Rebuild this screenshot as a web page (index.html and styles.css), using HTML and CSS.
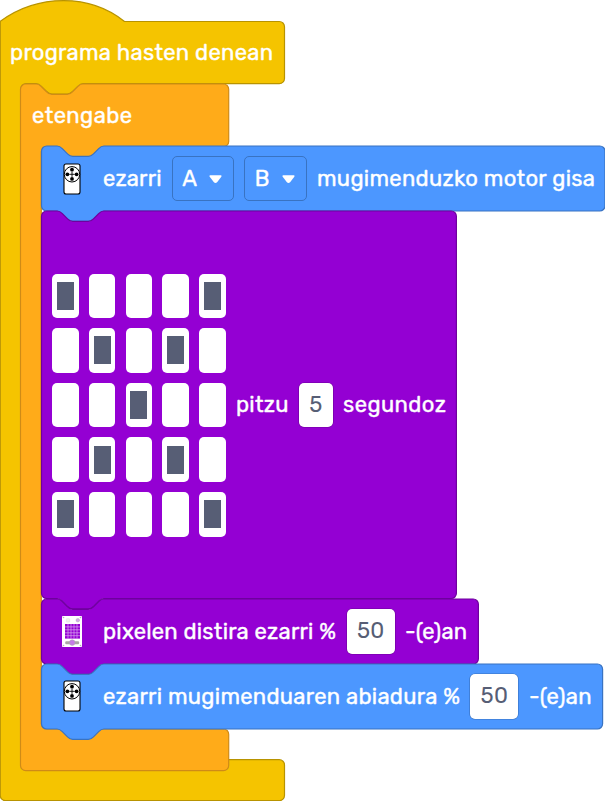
FILE: index.html
```html
<!DOCTYPE html>
<html lang="eu">
<head>
<meta charset="utf-8">
<title>Blokeak</title>
<link rel="stylesheet" href="styles.css">
</head>
<body>
<svg class="defs" width="0" height="0" aria-hidden="true">
  <symbol id="motor" viewBox="0 0 18 32">
    <rect x="1" y="1" width="16" height="30" rx="2" fill="#fff" stroke="#000" stroke-width="1.1"/>
    <circle cx="9" cy="11.3" r="7.7" fill="#fff" stroke="#000" stroke-width="1"/>
    <path d="M9 8.7v5.2M6.4 11.3h5.2" stroke="#000" stroke-width=".9"/>
    <g fill="#000"><circle cx="9" cy="6.7" r="1.9"/><circle cx="9" cy="15.9" r="1.9"/><circle cx="4.4" cy="11.3" r="1.9"/><circle cx="13.6" cy="11.3" r="1.9"/></g>
  </symbol>
  <symbol id="screen" viewBox="0 0 20 31">
    <rect width="20" height="31" rx=".8" fill="#fff"/>
    <g fill="#b9a9c4"><circle cx="1.5" cy="1.5" r=".8"/><circle cx="18.5" cy="1.5" r=".8"/><circle cx="1.5" cy="29.5" r=".8"/><circle cx="18.5" cy="29.5" r=".8"/></g>
    <rect x="4.3" y="2.7" width="3.4" height="3.4" rx=".6" fill="#f1f1f1" stroke="#ddd" stroke-width=".5"/>
    <circle cx="15.8" cy="4.2" r="1.8" fill="#d4a5ec" stroke="#aaa" stroke-width=".4"/>
    <rect x="3" y="8" width="15" height="14.6" fill="#9400d3"/>
    <path d="M6 8v14.6M9 8v14.6M12 8v14.6M15 8v14.6M3 10.9h15M3 13.8h15M3 16.8h15M3 19.7h15" stroke="#dfb5f3" stroke-width=".65"/>
    <rect x="3.2" y="25.2" width="14" height="3" rx="1.2" fill="#aaa5a5"/>
    <circle cx="10.2" cy="26.6" r="2.8" fill="#c57be6" stroke="#aaa" stroke-width=".5"/>
  </symbol>
</svg>
<main class="program">
  <svg class="shape yellow" width="285" height="801"><path d="M.3 21.3C38-6.3 90-6.3 124.5 21.5H279.3a5.2 5.2 0 0 1 5.2 5.2V78.5a5.2 5.2 0 0 1-5.2 5.2H83c-2.6 0-3.9 1.3-5.2 2.6l-5.2 5.2c-1.3 1.3-2.6 2.6-5.2 2.6h-15.6c-2.6 0-3.9-1.3-5.2-2.6l-5.2-5.2c-1.3-1.3-2.6-2.6-5.2-2.6H26a5.2 5.2 0 0 0-5.2 5.2V754.5a5.2 5.2 0 0 0 5.2 5.2H279.3a5.2 5.2 0 0 1 5.2 5.2V795.5a5.2 5.2 0 0 1-5.2 5.2H5.5A5.2 5.2 0 0 1 .3 795.5Z"/></svg>
  <div class="hat"><svg class="label" width="263" height="30"><text x="0" y="22" textLength="263">programa hasten denean</text></svg></div>
  <section class="forever">
    <svg class="shape orange" width="209" height="688"><path d="M0 5.2A5.2 5.2 0 0 1 5.2 0H15.6c2.6 0 3.9 1.3 5.2 2.6l5.2 5.2c1.3 1.3 2.6 2.6 5.2 2.6h15.6c2.6 0 3.9-1.3 5.2-2.6l5.2-5.2c1.3-1.3 2.6-2.6 5.2-2.6H203a5.2 5.2 0 0 1 5.2 5.2V57.5a5.2 5.2 0 0 1-5.2 5.2H83.2c-2.6 0-3.9 1.3-5.2 2.6l-5.2 5.2c-1.3 1.3-2.6 2.6-5.2 2.6h-15.6c-2.6 0-3.9-1.3-5.2-2.6l-5.2-5.2c-1.3-1.3-2.6-2.6-5.2-2.6H26a5.2 5.2 0 0 0-5.2 5.2V639.8a5.2 5.2 0 0 0 5.2 5.2H203a5.2 5.2 0 0 1 5.2 5.2V681.4a5.2 5.2 0 0 1-5.2 5.2H5.2A5.2 5.2 0 0 1 0 681.4Z"/></svg>
    <div class="forever-head"><svg class="label" width="100" height="30"><text x="0" y="22" textLength="100">etengabe</text></svg></div>
    <div class="stack">
      <div class="block row">
        <svg class="shape blue" width="564" height="76"><path d="M0 5.2A5.2 5.2 0 0 1 5.2 0H15.6c2.6 0 3.9 1.3 5.2 2.6l5.2 5.2c1.3 1.3 2.6 2.6 5.2 2.6h15.6c2.6 0 3.9-1.3 5.2-2.6l5.2-5.2c1.3-1.3 2.6-2.6 5.2-2.6H558.3a5.2 5.2 0 0 1 5.2 5.2V59.8a5.2 5.2 0 0 1-5.2 5.2H62.4c-2.6 0-3.9 1.3-5.2 2.6l-5.2 5.2c-1.3 1.3-2.6 2.6-5.2 2.6h-15.6c-2.6 0-3.9-1.3-5.2-2.6l-5.2-5.2c-1.3-1.3-2.6-2.6-5.2-2.6H5.2A5.2 5.2 0 0 1 0 59.8Z"/></svg>
        <span class="icon"><svg width="18" height="32"><use href="#motor"/></svg></span>
        <svg class="label" width="58.6" height="30"><text x="0" y="22" textLength="58.5">ezarri</text></svg>
        <span class="drop"><span>A</span><svg width="15" height="10"><path d="M2.2 1.2H12.8Q14.2 1.2 13.3 2.7L9.3 8Q7.5 9.8 5.7 8L1.7 2.7Q.8 1.2 2.2 1.2Z"/></svg></span>
        <span class="drop"><span>B</span><svg width="15" height="10"><path d="M2.2 1.2H12.8Q14.2 1.2 13.3 2.7L9.3 8Q7.5 9.8 5.7 8L1.7 2.7Q.8 1.2 2.2 1.2Z"/></svg></span>
        <svg class="label" width="278" height="30"><text x="0" y="22" textLength="278">mugimenduzko motor gisa</text></svg>
      </div>
      <div class="block row tall">
        <svg class="shape purple" width="416" height="398"><path d="M0 5.2A5.2 5.2 0 0 1 5.2 0H15.6c2.6 0 3.9 1.3 5.2 2.6l5.2 5.2c1.3 1.3 2.6 2.6 5.2 2.6h15.6c2.6 0 3.9-1.3 5.2-2.6l5.2-5.2c1.3-1.3 2.6-2.6 5.2-2.6H409.7a5.2 5.2 0 0 1 5.2 5.2V382.3a5.2 5.2 0 0 1-5.2 5.2H62.4c-2.6 0-3.9 1.3-5.2 2.6l-5.2 5.2c-1.3 1.3-2.6 2.6-5.2 2.6h-15.6c-2.6 0-3.9-1.3-5.2-2.6l-5.2-5.2c-1.3-1.3-2.6-2.6-5.2-2.6H5.2A5.2 5.2 0 0 1 0 382.3Z"/></svg>
        <div class="matrix">
          <i class="on"></i><i></i><i></i><i></i><i class="on"></i>
          <i></i><i class="on"></i><i></i><i class="on"></i><i></i>
          <i></i><i></i><i class="on"></i><i></i><i></i>
          <i></i><i class="on"></i><i></i><i class="on"></i><i></i>
          <i class="on"></i><i></i><i></i><i></i><i class="on"></i>
        </div>
        <svg class="label" width="52.6" height="30"><text x="0" y="22" textLength="52.5">pitzu</text></svg>
        <span class="value small">5</span>
        <svg class="label" width="103" height="30"><text x="0" y="22" textLength="103">segundoz</text></svg>
      </div>
      <div class="block row">
        <svg class="shape purple" width="438" height="76"><path d="M0 5.2A5.2 5.2 0 0 1 5.2 0H15.6c2.6 0 3.9 1.3 5.2 2.6l5.2 5.2c1.3 1.3 2.6 2.6 5.2 2.6h15.6c2.6 0 3.9-1.3 5.2-2.6l5.2-5.2c1.3-1.3 2.6-2.6 5.2-2.6H431.7a5.2 5.2 0 0 1 5.2 5.2V59.8a5.2 5.2 0 0 1-5.2 5.2H62.4c-2.6 0-3.9 1.3-5.2 2.6l-5.2 5.2c-1.3 1.3-2.6 2.6-5.2 2.6h-15.6c-2.6 0-3.9-1.3-5.2-2.6l-5.2-5.2c-1.3-1.3-2.6-2.6-5.2-2.6H5.2A5.2 5.2 0 0 1 0 59.8Z"/></svg>
        <span class="icon"><svg width="20" height="31"><use href="#screen"/></svg></span>
        <svg class="label" width="233.5" height="30"><text x="0" y="22.7" textLength="233">pixelen distira ezarri %</text></svg>
        <span class="value">50</span>
        <svg class="label" width="62" height="30"><text x="0" y="22.7" textLength="62">-(e)an</text></svg>
      </div>
      <div class="block row">
        <svg class="shape blue" width="562" height="76"><path d="M0 5.2A5.2 5.2 0 0 1 5.2 0H15.6c2.6 0 3.9 1.3 5.2 2.6l5.2 5.2c1.3 1.3 2.6 2.6 5.2 2.6h15.6c2.6 0 3.9-1.3 5.2-2.6l5.2-5.2c1.3-1.3 2.6-2.6 5.2-2.6H555.9a5.2 5.2 0 0 1 5.2 5.2V59.8a5.2 5.2 0 0 1-5.2 5.2H62.4c-2.6 0-3.9 1.3-5.2 2.6l-5.2 5.2c-1.3 1.3-2.6 2.6-5.2 2.6h-15.6c-2.6 0-3.9-1.3-5.2-2.6l-5.2-5.2c-1.3-1.3-2.6-2.6-5.2-2.6H5.2A5.2 5.2 0 0 1 0 59.8Z"/></svg>
        <span class="icon"><svg width="18" height="32"><use href="#motor"/></svg></span>
        <svg class="label" width="357.2" height="30"><text x="0" y="22.7" textLength="357">ezarri mugimenduaren abiadura %</text></svg>
        <span class="value">50</span>
        <svg class="label" width="62" height="30"><text x="0" y="22.7" textLength="62.5">-(e)an</text></svg>
      </div>
    </div>
  </section>
</main>
</body>
</html>
```
FILE: styles.css
```css
* { box-sizing: border-box; }
body {
  margin: 0;
  background: #fff;
  overflow: hidden;
  font: 400 22px/26px Rubik, Roboto, sans-serif;
  color: #fff;
}
.defs { display: block; }
.program, .forever, .block { position: relative; isolation: isolate; }
.program { width: 605px; height: 801px; }
.shape {
  position: absolute;
  left: 0;
  top: 0;
  z-index: -1;
  overflow: visible;
  stroke-width: 1.2;
}
.yellow { fill: #f5c400; stroke: #b89300; }
.orange { fill: #ffab19; stroke: #cf8b17; }
.blue { fill: #4c97ff; stroke: #3973c2; }
.purple { fill: #9400d3; stroke: #6f009e; }
.orange path, .blue path, .purple path { transform: translate(.5px, 0); }
.label {
  flex: none;
  display: block;
  overflow: visible;
  fill: #fff;
  stroke: #fff;
  stroke-width: .4px;
}
.hat { height: 83.5px; padding: 38.3px 0 0 10.4px; }
.forever { margin-left: 20.4px; }
.forever-head { height: 62.8px; padding: 17.7px 0 0 11.2px; }
.stack { margin-left: 21px; }
.row {
  height: 65px;
  display: flex;
  align-items: center;
  gap: 10.4px;
  padding-left: 10.7px;
}
.tall { height: 387.5px; }
.icon { flex: none; width: 40.4px; display: flex; justify-content: center; }
.drop {
  flex: none;
  width: 62.2px;
  height: 45px;
  display: flex;
  align-items: center;
  gap: 11px;
  padding-left: 9.4px;
  border: 1px solid #3973c2;
  border-radius: 5px;
}
.drop span { width: 15px; -webkit-text-stroke: .4px #fff; }
.drop svg { fill: #fff; }
.value {
  flex: none;
  width: 48px;
  height: 44.5px;
  display: flex;
  align-items: center;
  justify-content: center;
  background: #fff;
  color: #575e75;
  border-radius: 5px;
  box-shadow: 0 0 0 .6px rgba(0, 0, 0, .25);
  letter-spacing: .3px;
}
.small { width: 34px; }
.matrix {
  flex: none;
  display: grid;
  grid-template-columns: repeat(5, 26.6px);
  grid-auto-rows: 44.6px;
  gap: 10px 10.15px;
}
.matrix i {
  display: flex;
  align-items: center;
  justify-content: center;
  background: #fff;
  border-radius: 5px;
}
.on::before { content: ""; width: 17px; height: 28px; background: #575e75; }
```
